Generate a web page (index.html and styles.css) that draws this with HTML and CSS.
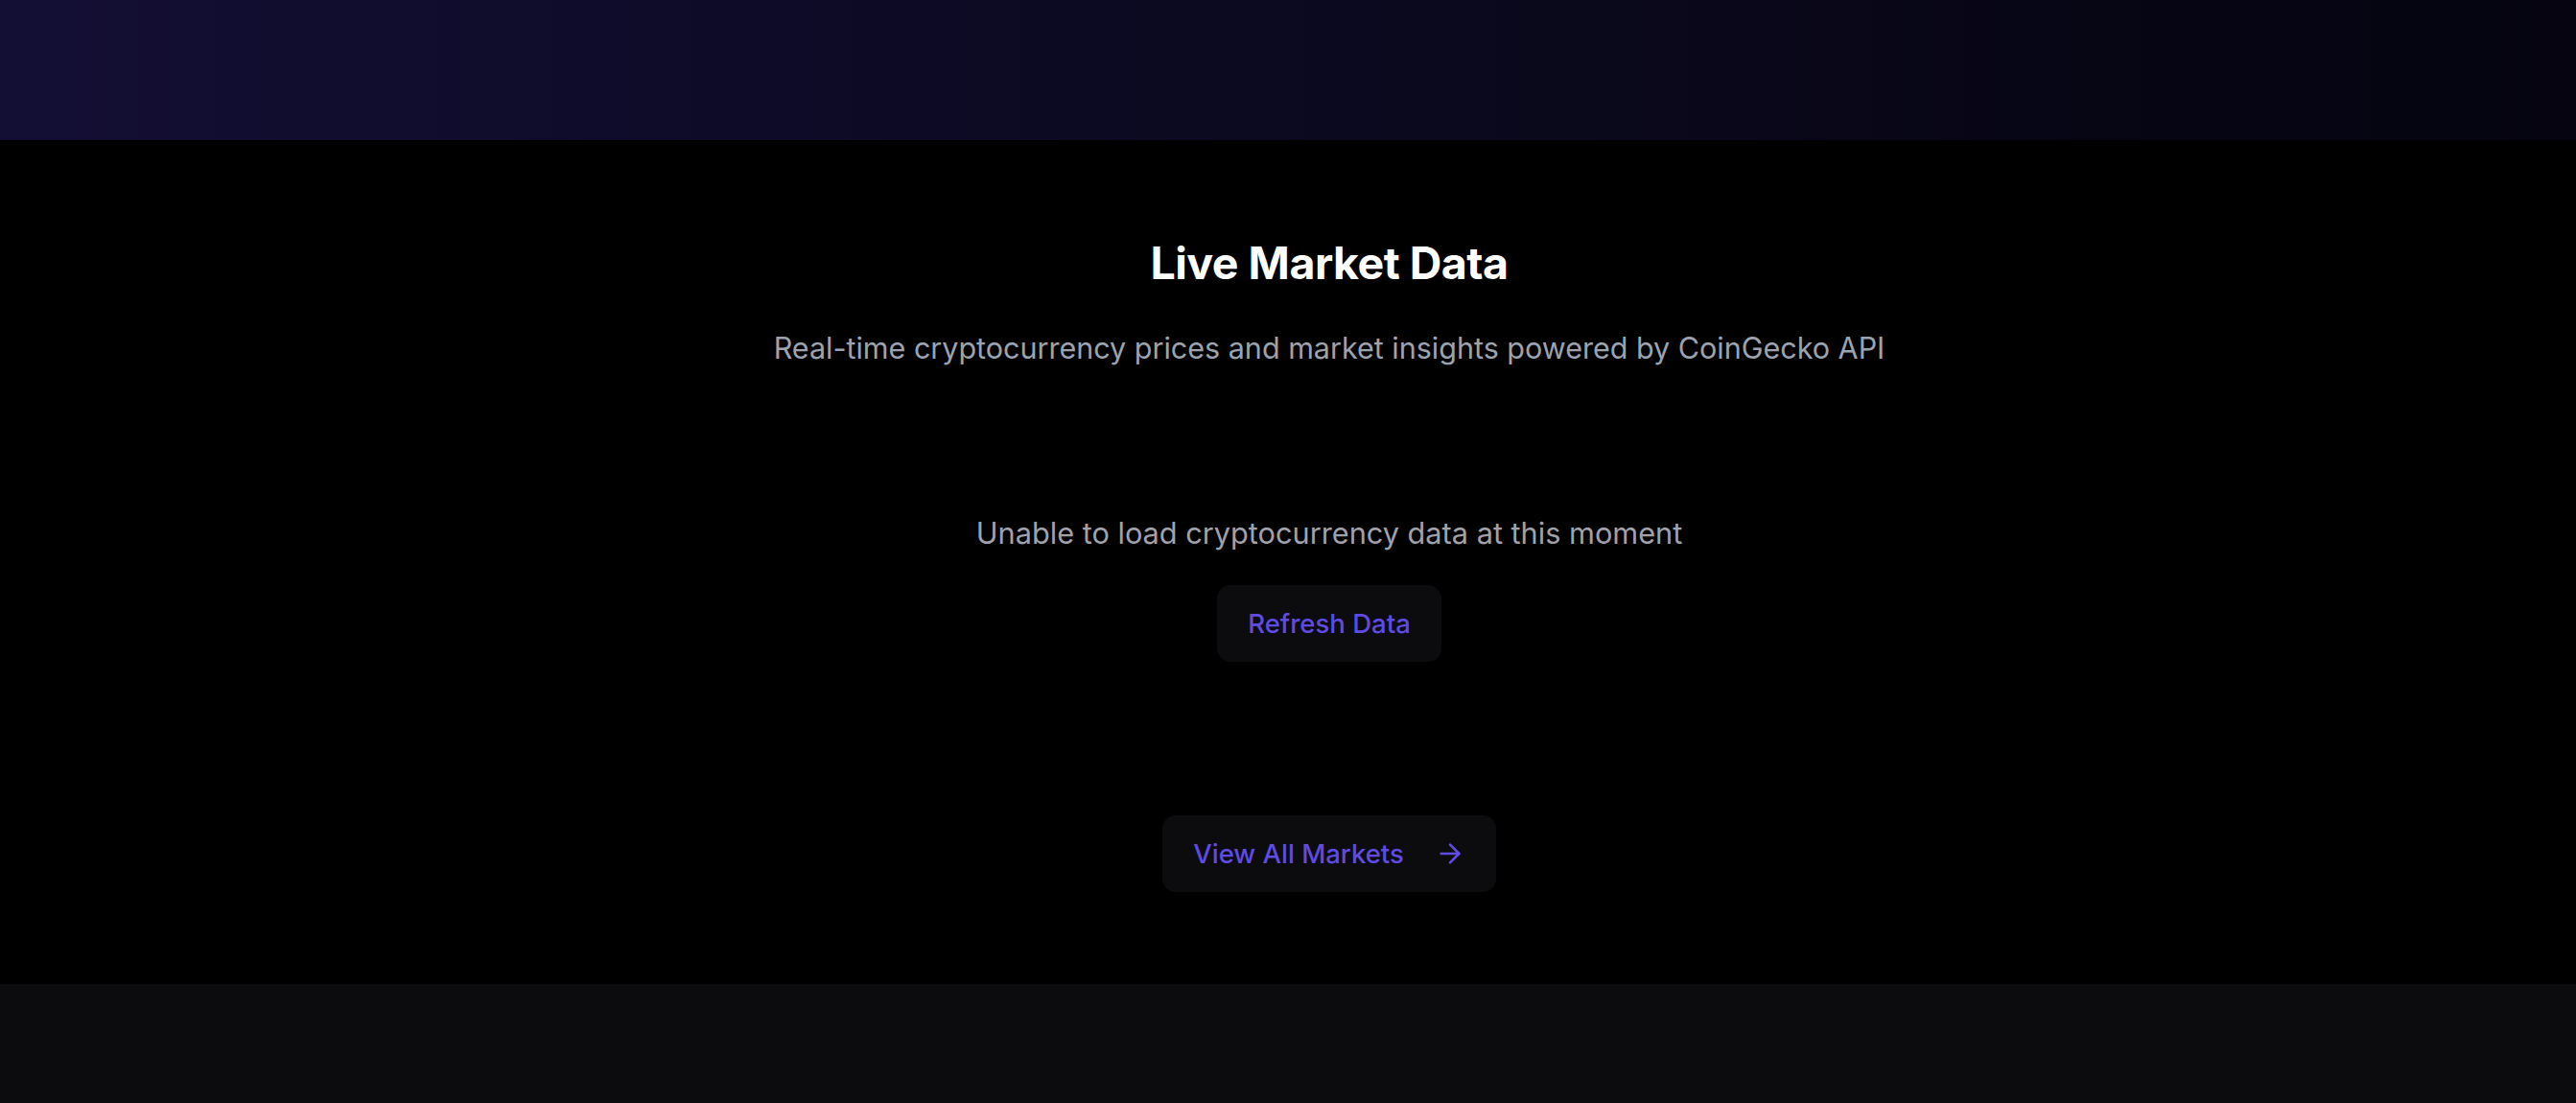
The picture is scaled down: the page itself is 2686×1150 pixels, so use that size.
FILE: index.html
```html
<!DOCTYPE html>
<html lang="en">
<head>
<meta charset="utf-8">
<title>Live Market Data</title>
<link rel="stylesheet" href="styles.css">
</head>
<body>
  <div class="hero-tail"></div>
  <section class="market">
    <div class="market-inner">
      <h2 class="market-title">Live Market Data</h2>
      <p class="market-subtitle">Real-time cryptocurrency prices and market insights powered by CoinGecko API</p>
      <div class="market-status">
        <p class="status-text">Unable to load cryptocurrency data at this moment</p>
        <button class="btn btn-refresh" type="button">Refresh Data</button>
      </div>
      <a class="btn btn-view" href="#">
        <span>View All Markets</span>
        <svg class="btn-icon" viewBox="0 0 24 24" width="32" height="32" fill="none" stroke="currentColor" stroke-width="2" stroke-linecap="round" stroke-linejoin="round"><path d="M5 12h14"/><path d="m12 5 7 7-7 7"/></svg>
      </a>
    </div>
  </section>
  <footer class="footer"></footer>
</body>
</html>
```
FILE: styles.css
```css
* { box-sizing: border-box; }
html, body { margin: 0; padding: 0; }
body {
  background: #0c0c0e;
  font-family: Inter, "Noto Sans", "Liberation Sans", sans-serif;
  color: #fff;
  min-height: 1150px;
}
.hero-tail {
  height: 146px;
  background: linear-gradient(90deg, #130e33 0%, #0e0b28 30%, #0a081b 60%, #050410 100%);
}
.market {
  background: #000;
  padding: 100px 0 96px 86px;
}
.market-inner {
  display: flex;
  flex-direction: column;
  align-items: center;
  text-align: center;
}
.market-title {
  margin: 0;
  font-size: 46.5px;
  line-height: 57.6px;
  font-weight: 700;
  color: #fff;
  letter-spacing: -0.5px;
}
.market-subtitle {
  margin: 36px 0 0;
  font-size: 30.5px;
  line-height: 45px;
  color: #9ca3af;
}
.market-status {
  margin-top: 148px;
  display: flex;
  flex-direction: column;
  align-items: center;
}
.status-text {
  margin: 0;
  font-size: 30.7px;
  line-height: 45px;
  color: #a1a1aa;
}
.btn {
  display: inline-flex;
  align-items: center;
  gap: 32px;
  padding: 20px 32px;
  border: 0;
  border-radius: 14px;
  background: #0c0c0f;
  color: #5f4be2;
  font-family: inherit;
  font-size: 27.5px;
  line-height: 40px;
  font-weight: 500;
  text-decoration: none;
  cursor: pointer;
}
.btn-refresh { margin-top: 32px; }
.btn-view { margin-top: 160px; }
.btn-icon { display: block; flex: none; }
.footer { height: 124px; background: #0c0c0e; }
```
